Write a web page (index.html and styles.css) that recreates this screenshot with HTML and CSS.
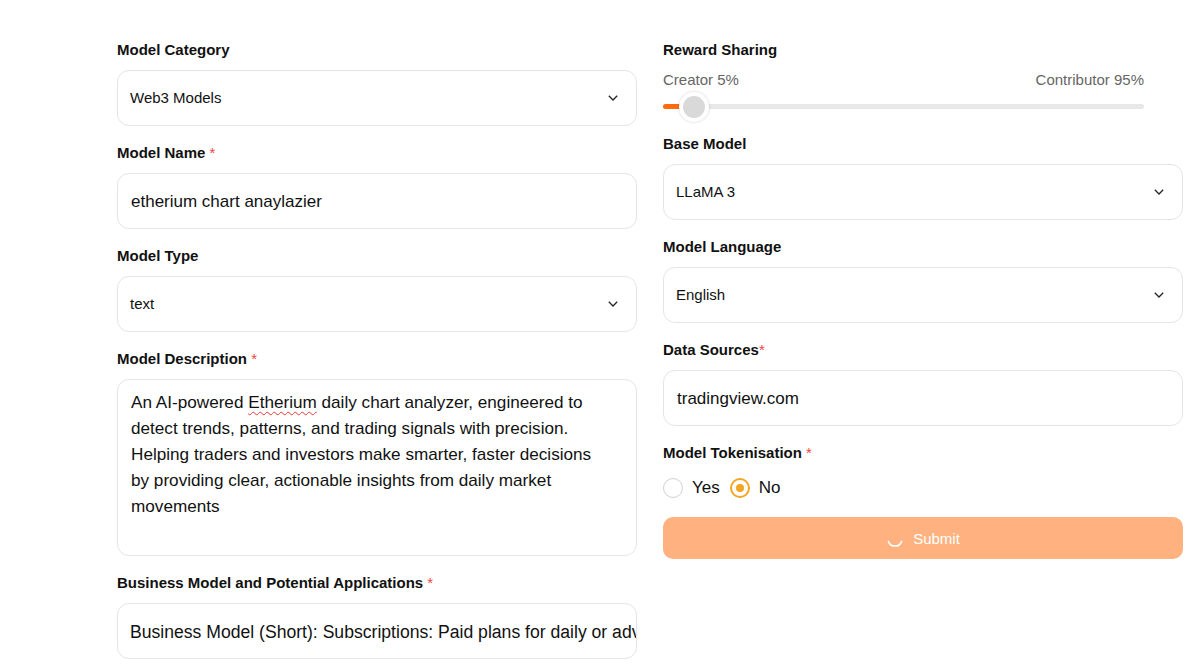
FILE: index.html
```html
<!DOCTYPE html>
<html lang="en">
<head>
  <meta charset="UTF-8">
  <meta name="viewport" content="width=device-width, initial-scale=1.0">
  <title>Create Model</title>
  <link rel="stylesheet" href="styles.css">
</head>
<body>
  <form class="model-form">
    <div class="col">
      <div class="field">
        <label class="label">Model Category</label>
        <div class="select">
          <span>Web3 Models</span>
          <svg class="chevron" width="10" height="6" viewBox="0 0 10 6"><path d="M.8.8 5 5 9.2.8" fill="none" stroke="#222" stroke-width="1.3"/></svg>
        </div>
      </div>

      <div class="field">
        <label class="label">Model Name <span class="req">*</span></label>
        <div class="input">etherium chart anaylazier</div>
      </div>

      <div class="field">
        <label class="label">Model Type</label>
        <div class="select">
          <span>text</span>
          <svg class="chevron" width="10" height="6" viewBox="0 0 10 6"><path d="M.8.8 5 5 9.2.8" fill="none" stroke="#222" stroke-width="1.3"/></svg>
        </div>
      </div>

      <div class="field">
        <label class="label">Model Description <span class="req">*</span></label>
        <div class="textarea">An AI-powered <span class="typo">Etherium</span> daily chart analyzer, engineered to detect trends, patterns, and trading signals with precision. Helping traders and investors make smarter, faster decisions by providing clear, actionable insights from daily market movements</div>
      </div>

      <div class="field">
        <label class="label">Business Model and Potential Applications <span class="req">*</span></label>
        <div class="input clip">Business Model (Short): Subscriptions: Paid plans for daily or advanced chart reports</div>
      </div>
    </div>

    <div class="col">
      <div class="field reward">
        <label class="label">Reward Sharing</label>
        <div class="split">
          <span>Creator 5%</span>
          <span>Contributor 95%</span>
        </div>
        <div class="slider">
          <div class="track"></div>
          <div class="fill"></div>
          <div class="thumb"></div>
        </div>
      </div>

      <div class="field">
        <label class="label">Base Model</label>
        <div class="select">
          <span>LLaMA 3</span>
          <svg class="chevron" width="10" height="6" viewBox="0 0 10 6"><path d="M.8.8 5 5 9.2.8" fill="none" stroke="#222" stroke-width="1.3"/></svg>
        </div>
      </div>

      <div class="field">
        <label class="label">Model Language</label>
        <div class="select">
          <span>English</span>
          <svg class="chevron" width="10" height="6" viewBox="0 0 10 6"><path d="M.8.8 5 5 9.2.8" fill="none" stroke="#222" stroke-width="1.3"/></svg>
        </div>
      </div>

      <div class="field">
        <label class="label">Data Sources<span class="req">*</span></label>
        <div class="input">tradingview.com</div>
      </div>

      <div class="field tokens">
        <label class="label">Model Tokenisation <span class="req">*</span></label>
        <div class="radios">
          <span class="radio"></span><span>Yes</span>
          <span class="radio checked"></span><span>No</span>
        </div>
      </div>

      <button type="button" class="submit" disabled>
        <svg class="spinner" width="18" height="18" viewBox="0 0 18 18"><path d="M2.4 11.4A7 7 0 0 0 15.6 11.4" fill="none" stroke="#fff" stroke-width="1.6" stroke-linecap="round"/></svg>
        <span>Submit</span>
      </button>
    </div>
  </form>
</body>
</html>
```

FILE: styles.css
```css
body {
  margin: 0;
  background: #fff;
  font-family: "Liberation Sans", Arial, sans-serif;
  color: #111;
}
.model-form {
  display: grid;
  grid-template-columns: 520px 520px;
  column-gap: 26px;
  padding: 40px 0 0 117px;
}
.field {
  margin-bottom: 17px;
}
.label {
  display: block;
  font-size: 15px;
  font-weight: bold;
  line-height: 20px;
  margin-bottom: 10px;
  color: #111;
}
.req {
  color: #ef4444;
  font-weight: normal;
}
.select,
.input {
  box-sizing: border-box;
  height: 56px;
  border: 1px solid #e5e5e5;
  border-radius: 12px;
  display: flex;
  align-items: center;
  white-space: nowrap;
}
.select {
  justify-content: space-between;
  padding: 0 18px 1px 12px;
  font-size: 15px;
}
.input {
  padding: 2px 0 0 13px;
  font-size: 17px;
}
.input.clip {
  overflow: hidden;
  padding-left: 12px;
  padding-right: 2px;
  font-size: 17.6px;
}
.textarea {
  box-sizing: border-box;
  height: 177px;
  border: 1px solid #e5e5e5;
  border-radius: 12px;
  padding: 9px 30px 0 13px;
  font-size: 17.15px;
  line-height: 26px;
}
.typo {
  text-decoration: underline wavy #e53935;
  text-decoration-thickness: 1px;
  text-underline-offset: 3px;
}

/* reward split slider */
.reward {
  width: 481px;
  margin-bottom: 12px;
}
.split {
  display: flex;
  justify-content: space-between;
  font-size: 15px;
  line-height: 20px;
  color: #666;
}
.slider {
  position: relative;
  height: 32px;
}
.track {
  position: absolute;
  left: 0;
  right: 0;
  top: 14px;
  height: 5px;
  border-radius: 3px;
  background: #e8e8e8;
}
.fill {
  position: absolute;
  left: 0;
  top: 14px;
  width: 28px;
  height: 5px;
  border-radius: 3px;
  background: #ff6a10;
}
.thumb {
  position: absolute;
  left: 16px;
  top: 2px;
  width: 22px;
  height: 22px;
  border: 4px solid #fff;
  border-radius: 50%;
  background: #d9d9d9;
  box-shadow: 0 0 3px rgba(0, 0, 0, 0.18);
}

/* tokenisation radios */
.tokens {
  margin-bottom: 17px;
}
.tokens .label {
  margin-bottom: 13px;
}
.radios {
  display: flex;
  align-items: center;
  gap: 9px;
  font-size: 17px;
  line-height: 24px;
}
.radio {
  box-sizing: border-box;
  width: 20px;
  height: 20px;
  border: 1.5px solid #cfcfcf;
  border-radius: 50%;
  display: flex;
  align-items: center;
  justify-content: center;
}
.radio.checked {
  border: 2px solid #f5a524;
  margin-left: 1px;
}
.radio.checked::after {
  content: "";
  width: 8px;
  height: 8px;
  border-radius: 50%;
  background: #f5a524;
}

.submit {
  width: 520px;
  height: 42px;
  border: none;
  border-radius: 10px;
  background: #ffb27f;
  color: #fff;
  font-family: inherit;
  font-size: 15px;
  display: flex;
  align-items: center;
  justify-content: center;
  gap: 9px;
  padding: 0;
}
.spinner {
  margin-top: 2px;
}
```
